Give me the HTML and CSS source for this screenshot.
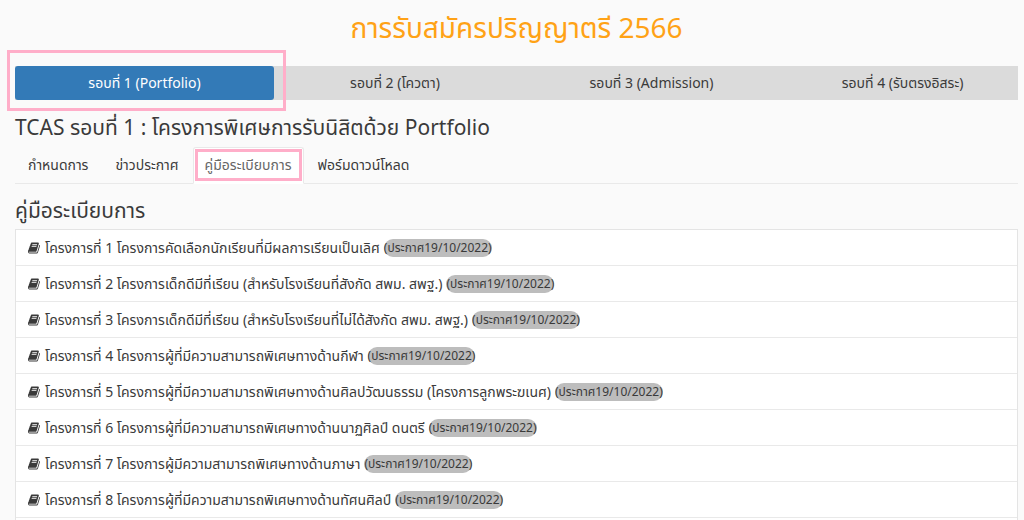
FILE: index.html
```html
<!DOCTYPE html>
<html lang="th">
<head>
<meta charset="utf-8">
<title>การรับสมัครปริญญาตรี 2566</title>
<link rel="stylesheet" href="styles.css">
</head>
<body>
<svg class="sprite" aria-hidden="true"><symbol id="book" viewBox="0 0 1664 1536"><path fill-rule="evenodd" d="M1639 350q40 57 18 129l-275 906q-19 64-76.500 107.500T1183 1536H260q-77 0-148.500-53.500T12 1351q-24-67-2-127 0-4 3-27t4-37q1-8-3-21.500t-3-19.500q2-11 8-21t16.500-23.500T52 1051q23-38 45-91.500t30-91.500q3-10 .5-30t-.5-28q3-11 17-28t17-23q21-36 42-92t25-90q1-9-2.500-32t.5-28q4-13 22-30.500t22-22.500q19-26 42.500-84.500T340 283q1-8-3-25.500t-2-26.500q2-8 9-18t18-23 17-21q8-12 16.500-30.500t15-35 16-36 19.500-32 26.500-23.500 36-11.500T556 5l-1 3q38-9 51-9h761q74 0 114 56t18 130l-274 906q-36 119-71.500 153.500T1025 1279H156q-27 0-38 15-11 16-1 43 24 70 144 70h923q29 0 56-15.500t35-41.500l300-987q7-22 5-57 38 15 59 43zM575 352q-4 13 2 22.500t20 9.500h608q13 0 25.500-9.500T1247 352l21-64q4-13-2-22.500t-20-9.500H638q-13 0-25.500 9.500T596 288zM492 608q-4 13 2 22.500t20 9.500h608q13 0 25.500-9.500T1164 608l21-64q4-13-2-22.500t-20-9.500H555q-13 0-25.500 9.500T513 544z"/></symbol></svg>
<main class="page">
<h1>การรับสมัครปริญญาตรี 2566</h1>
<nav class="rounds">
<a class="active" href="#r1">รอบที่ 1 (Portfolio)</a>
<a href="#r2">รอบที่ 2 (โควตา)</a>
<a href="#r3">รอบที่ 3 (Admission)</a>
<a href="#r4">รอบที่ 4 (รับตรงอิสระ)</a>
</nav>
<h2>TCAS รอบที่ 1 : โครงการพิเศษการรับนิสิตด้วย Portfolio</h2>
<nav class="tabs">
<a href="#schedule">กำหนดการ</a>
<a href="#news">ข่าวประกาศ</a>
<a class="active" href="#guide">คู่มือระเบียบการ</a>
<a href="#forms">ฟอร์มดาวน์โหลด</a>
</nav>
<h3>คู่มือระเบียบการ</h3>
<div class="list">
<a href="#p1"><svg class="icon"><use href="#book"/></svg>โครงการที่ 1 โครงการคัดเลือกนักเรียนที่มีผลการเรียนเป็นเลิศ <span class="badge">(ประกาศ19/10/2022)</span></a>
<a href="#p2"><svg class="icon"><use href="#book"/></svg>โครงการที่ 2 โครงการเด็กดีมีที่เรียน (สำหรับโรงเรียนที่สังกัด สพม. สพฐ.) <span class="badge">(ประกาศ19/10/2022)</span></a>
<a href="#p3"><svg class="icon"><use href="#book"/></svg>โครงการที่ 3 โครงการเด็กดีมีที่เรียน (สำหรับโรงเรียนที่ไม่ได้สังกัด สพม. สพฐ.) <span class="badge">(ประกาศ19/10/2022)</span></a>
<a href="#p4"><svg class="icon"><use href="#book"/></svg>โครงการที่ 4 โครงการผู้ที่มีความสามารถพิเศษทางด้านกีฬา <span class="badge">(ประกาศ19/10/2022)</span></a>
<a href="#p5"><svg class="icon"><use href="#book"/></svg>โครงการที่ 5 โครงการผู้ที่มีความสามารถพิเศษทางด้านศิลปวัฒนธรรม (โครงการลูกพระฆเนศ) <span class="badge">(ประกาศ19/10/2022)</span></a>
<a href="#p6"><svg class="icon"><use href="#book"/></svg>โครงการที่ 6 โครงการผู้ที่มีความสามารถพิเศษทางด้านนาฏศิลป์ ดนตรี <span class="badge">(ประกาศ19/10/2022)</span></a>
<a href="#p7"><svg class="icon"><use href="#book"/></svg>โครงการที่ 7 โครงการผู้มีความสามารถพิเศษทางด้านภาษา <span class="badge">(ประกาศ19/10/2022)</span></a>
<a href="#p8"><svg class="icon"><use href="#book"/></svg>โครงการที่ 8 โครงการผู้ที่มีความสามารถพิเศษทางด้านทัศนศิลป์ <span class="badge">(ประกาศ19/10/2022)</span></a>
</div>
</main>
</body>
</html>
```
FILE: styles.css
```css
* { box-sizing: border-box; }
body {
  margin: 0;
  background: #fafafa;
  color: #3a3a3a;
  font-family: "Noto Sans", "Noto Sans Thai", sans-serif;
  font-size: 14px;
  line-height: 20px;
}
a { color: inherit; text-decoration: none; }
.sprite { position: absolute; width: 0; height: 0; }
.page {
  display: flex;
  flex-direction: column;
  min-height: 100vh;
  padding: 11px 6px 0 15px;
}
h1, h2, h3 { margin: 0; font-weight: 400; }
h1 { color: #ffa216; font-size: 28px; line-height: 32px; text-align: center; }
.rounds {
  display: grid;
  grid-template-columns: 259fr 242fr 271fr 231fr;
  margin-top: 23px;
  background: #dbdbdb;
}
.rounds a { padding: 7px 8px; text-align: center; border-radius: 3px; }
.rounds .active {
  position: relative;
  background: #337ab7;
  color: #fff;
}
/* Pink highlight frames drawn over the selected items */
.active::after {
  content: "";
  position: absolute;
  border: 3px solid #ffaec9;
  pointer-events: none;
}
.rounds .active::after { inset: -16px -12px -11px -8px; }
h2 { margin-top: 14px; font-size: 21px; line-height: 26px; }
h3 { margin-top: 13px; font-size: 21px; line-height: 26px; }
.tabs {
  display: flex;
  gap: 1px;
  margin-top: 7px;
  border-bottom: 1px solid #e9e9e9;
}
.tabs a { padding: 8px 13px; }
.tabs .active {
  position: relative;
  margin-bottom: -1px;
  padding: 7px 11px 8px;
  border: 1px solid #e9e9e9;
  border-bottom-color: #fff;
  border-radius: 3px 3px 0 0;
  background: #fff;
  color: #666;
}
.tabs .active::after { inset: 1px 1px 2px; }
.list {
  flex: 1;
  margin-top: 6px;
  border: 1px solid #e4e4e4;
  border-bottom: 0;
  background: #fff;
}
.list a {
  display: flex;
  align-items: center;
  min-height: 35px;
  padding: 0 12px;
}
.list a { border-bottom: 1px solid #e9e9e9; min-height: 36px; }
.icon { width: 12px; height: 12px; margin-right: 5px; flex: none; fill: currentColor; }
.badge {
  margin-left: 4px;
  border-radius: 9px;
  background: #bdbdbd;
  font-size: 12px;
  line-height: 18px;
}
```
